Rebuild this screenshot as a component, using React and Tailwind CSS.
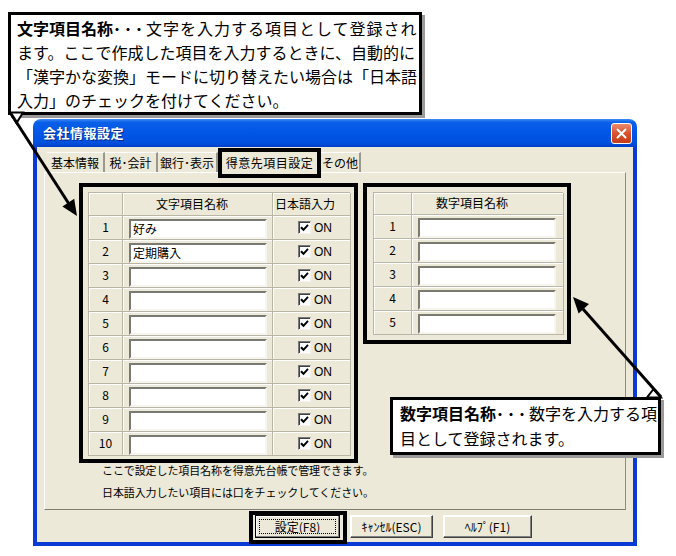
import React from "react";

const FONT = "font-['Noto_Sans_CJK_JP','Noto_Sans',sans-serif]";

function CheckBox() {
  return (
    <span className="w-[13px] h-[13px] bg-white border border-t-[#7a7a7a] border-l-[#7a7a7a] border-b-[#f4f3ee] border-r-[#f4f3ee] shadow-[inset_1px_1px_0_#404040] flex items-center justify-center">
      <svg width="9" height="9" viewBox="0 0 9 9">
        <path d="M1 4.2 L3.5 6.8 L8 1.8" stroke="#000" strokeWidth="2" fill="none" />
      </svg>
    </span>
  );
}

function TextBox({ value, w }) {
  return (
    <div
      className={`mt-[3px] ml-[6px] ${w} h-[20px] bg-white border-2 border-t-[#7b7a72] border-l-[#7b7a72] border-b-[#f6f5ef] border-r-[#f6f5ef] text-[12px] leading-[16px] pl-[2px] text-black`}
    >
      {value}
    </div>
  );
}

const cell =
  "border-r border-b border-[#b9b6a6] shadow-[inset_1px_1px_0_#ffffff]";

function LeftGrid() {
  const vals = ["好み", "定期購入", "", "", "", "", "", "", "", ""];
  return (
    <div className="w-[262px] grid grid-cols-[34px_150px_78px] border-t border-l border-[#b9b6a6] text-[12px] text-black">
      <div className={`${cell} h-[23px]`} />
      <div className={`${cell} h-[23px] pl-[33px] leading-[22px]`}>文字項目名称</div>
      <div className={`${cell} h-[23px] pl-[2px] leading-[22px]`}>日本語入力</div>
      {vals.map((v, i) => (
        <React.Fragment key={i}>
          <div className={`${cell} h-[24px] flex justify-center leading-[20px] pt-[1px]`}>{i + 1}</div>
          <div className={`${cell} h-[24px]`}>
            <TextBox value={v} w="w-[138px]" />
          </div>
          <div className={`${cell} h-[24px] flex items-center pl-[25px] gap-[3px]`}>
            <CheckBox />
            <span className="font-['Liberation_Sans',sans-serif] text-[12px] leading-[14px]">ON</span>
          </div>
        </React.Fragment>
      ))}
    </div>
  );
}

function RightGrid() {
  return (
    <div className="w-[190px] grid grid-cols-[38px_152px] border-t border-l border-[#b9b6a6] text-[12px] text-black">
      <div className={`${cell} h-[22px]`} />
      <div className={`${cell} h-[22px] pl-[24px] leading-[20px]`}>数字項目名称</div>
      {[1, 2, 3, 4, 5].map((n) => (
        <React.Fragment key={n}>
          <div className={`${cell} h-[24px] flex justify-center leading-[20px] pt-[1px]`}>{n}</div>
          <div className={`${cell} h-[24px]`}>
            <TextBox value="" w="w-[138px]" />
          </div>
        </React.Fragment>
      ))}
    </div>
  );
}

function Tab({ label, w }) {
  return (
    <div
      className={`${w} h-[20px] flex items-center justify-center text-[12px] text-black border-t border-t-white border-r-2 border-r-[#9a988c] leading-[18px]`}
    >
      {label}
    </div>
  );
}

function Button({ label, w, def }) {
  return (
    <div
      className={`relative ${w} h-[23px] flex items-center justify-center text-[12px] text-black bg-[#ece9d8] border ${
        def ? "border-black" : "border-t-white border-l-white border-r-[#404040] border-b-[#404040]"
      } shadow-[inset_-1px_-1px_0_#808080,inset_1px_1px_0_#ffffff]`}
    >
      {label}
      {def && (
        <>
          <span className="absolute inset-[3px] border border-dotted border-black" />
          <span className="absolute -left-[7px] -top-[5px] -right-[8px] -bottom-[7px] border-4 border-black" />
        </>
      )}
    </div>
  );
}

export default function App() {
  return (
    <div className={`relative w-[676px] h-[556px] bg-white overflow-hidden ${FONT}`}>
      {/* Dialog window */}
      <div className="absolute left-[33px] top-[119px] w-[604px] flex flex-col">
        {/* Title bar */}
        <div className="h-[28px] rounded-t-[8px] bg-[linear-gradient(to_bottom,#3d8cf5_0%,#0a5fe8_12%,#0056e6_50%,#0050de_85%,#0040c8_100%)] flex items-center justify-between pl-[10px] pr-[5px]">
          <span className="text-white font-bold text-[13px] leading-[16px] [text-shadow:1px_1px_0_#0a2a8a] tracking-[0.5px]">
            会社情報設定
          </span>
          <div className="w-[21px] h-[21px] rounded-[3px] border border-white bg-[linear-gradient(to_bottom,#eb8a6e,#d9512e_50%,#c43c1a)] flex items-center justify-center">
            <svg width="11" height="11" viewBox="0 0 11 11">
              <path d="M1.5 1.5 L9.5 9.5 M9.5 1.5 L1.5 9.5" stroke="#fff" strokeWidth="2" strokeLinecap="round" />
            </svg>
          </div>
        </div>
        {/* Body */}
        <div className="bg-[#ece9d8] border-l-4 border-r-4 border-b-4 border-[#0a3ad6] pt-[5px] pb-[4px]">
          {/* Tabs */}
          <div className="flex items-start h-[20px] ml-[10px]">
            <Tab label="基本情報" w="w-[58px]" />
            <Tab label="税･会計" w="w-[53px]" />
            <Tab label="銀行･表示" w="w-[60px]" />
            <div className="relative z-10 w-[103px] h-[30px] -mt-[4px] border-4 border-black bg-[#ece9d8] flex items-center justify-center text-[12px] text-black tracking-[0.5px]">
              得意先項目設定
            </div>
            <Tab label="その他" w="w-[40px]" />
          </div>
          {/* Panel */}
          <div className="ml-[7px] w-[582px] h-[338px] border border-t-white border-l-white border-r-[#8f8d82] border-b-[#7f7d72] pl-[34px] pt-[10px]">
            <div className="flex items-start gap-[5px]">
              <div className="w-[279px] flex flex-col">
                <div className="w-[279px] border-4 border-black pt-[5px] pb-[3px] pl-[5px] pr-[4px]">
                  <LeftGrid />
                </div>
                <div className="-mt-[4px] ml-[23px] text-[11px] leading-[22px] text-black tracking-[-0.1px] whitespace-nowrap">
                  <div>ここで設定した項目名称を得意先台帳で管理できます。</div>
                  <div>日本語入力したい項目には口をチェックしてください。</div>
                </div>
              </div>
              <div className="w-[208px] border-4 border-black pt-[5px] pb-[5px] pl-[6px] pr-[4px]">
                <RightGrid />
              </div>
            </div>
          </div>
          {/* Buttons */}
          <div className="flex mt-[5px] ml-[218px] gap-[10px]">
            <Button label="設定(F8)" w="w-[85px]" def />
            <Button label="ｷｬﾝｾﾙ(ESC)" w="w-[83px]" />
            <Button label="ﾍﾙﾌﾟ(F1)" w="w-[89px]" />
          </div>
        </div>
      </div>

      {/* Top callout */}
      <div className="absolute left-[8px] top-[12px] w-[414px] h-[103px] bg-white border-[3px] border-black shadow-[3px_3px_0_#9a9a9a] pl-[6px] pt-[1px] text-[16px] leading-[24px] text-black whitespace-nowrap z-10">
        <div>
          <span className="font-bold">文字項目名称<span className="tracking-[3px]">･･･</span></span>
          <span className="tracking-[1px]">文字を入力する項目として登録され</span>
        </div>
        <div>ます。ここで作成した項目を入力するときに、自動的に</div>
        <div>「漢字かな変換」モードに切り替えたい場合は「日本語</div>
        <div>入力」のチェックを付けてください。</div>
      </div>

      {/* Bottom callout */}
      <div className="absolute left-[390px] top-[397px] w-[271px] h-[58px] bg-white border-[3px] border-black shadow-[3px_3px_0_#9a9a9a] pl-[7px] pt-[1px] text-[16px] leading-[25px] text-black whitespace-nowrap z-10">
        <div>
          <span className="font-bold">数字項目名称<span className="tracking-[3px]">･･･</span></span>
          <span>数字を入力する項</span>
        </div>
        <div>目として登録されます。</div>
      </div>

      {/* Arrows */}
      <svg className="absolute inset-0 z-20 pointer-events-none" width="676" height="556" viewBox="0 0 676 556">
        <polygon points="10,112.5 23,112.5 16.5,123" fill="#fff" stroke="#000" strokeWidth="2" />
        <line x1="10.5" y1="113" x2="69" y2="204" stroke="#000" strokeWidth="3" />
        <polygon points="77,216 62.4,206.4 74.2,198.8" fill="#000" />
        <polygon points="661,397.5 647,397.5 653.6,389" fill="#fff" stroke="#000" strokeWidth="2" />
        <line x1="661" y1="397" x2="583" y2="309" stroke="#000" strokeWidth="3" />
        <polygon points="573,297 589,304.1 578.6,313.5" fill="#000" />
      </svg>
    </div>
  );
}
